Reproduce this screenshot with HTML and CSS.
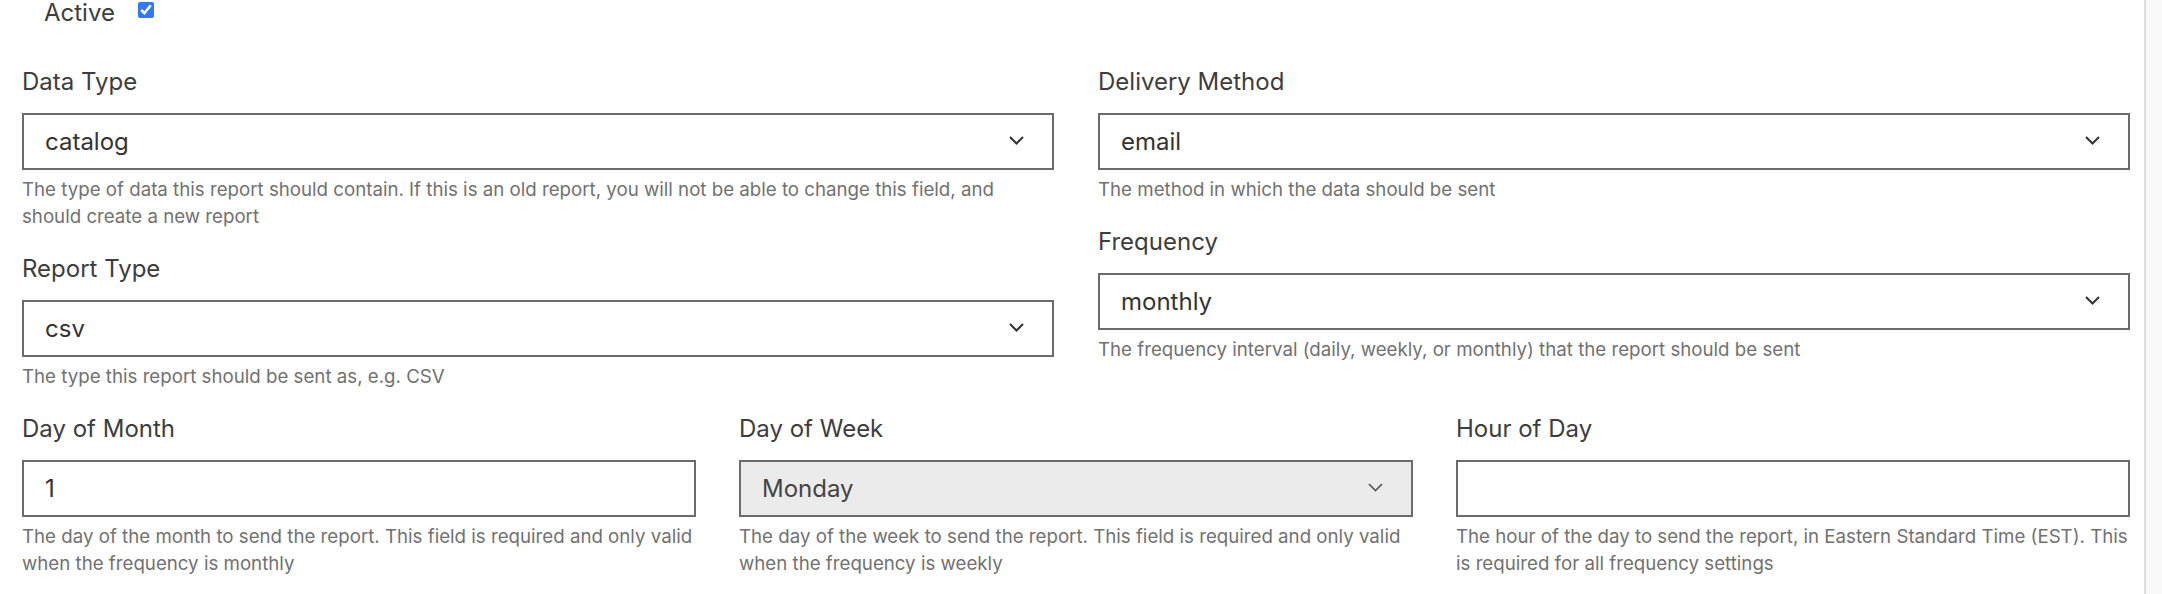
FILE: index.html
```html
<!DOCTYPE html>
<html lang="en">
<head>
  <meta charset="UTF-8" />
  <meta name="viewport" content="width=device-width, initial-scale=1.0"/>
  <title>Report Settings</title>
  <link rel="stylesheet" href="styles.css">
</head>
<body>
  <div class="page">
    <main class="form">

      <!-- active toggle -->
      <div class="active-row">
        <label for="active">Active</label>
        <input type="checkbox" id="active" checked />
      </div>

      <div class="cols">
        <div class="col">
          <div class="field">
            <label class="field-label">Data Type</label>
            <div class="select-wrap">
              <select class="control">
                <option>catalog</option>
              </select>
              <svg class="chevron" width="15" height="9" viewBox="0 0 15 9"><path d="M1 1l6.5 6.5L14 1" /></svg>
            </div>
            <p class="help">The type of data this report should contain. If this is an old report, you will not be able to change this field, and should create a new report</p>
          </div>

          <div class="field">
            <label class="field-label">Report Type</label>
            <div class="select-wrap">
              <select class="control">
                <option>csv</option>
              </select>
              <svg class="chevron" width="15" height="9" viewBox="0 0 15 9"><path d="M1 1l6.5 6.5L14 1" /></svg>
            </div>
            <p class="help">The type this report should be sent as, e.g. CSV</p>
          </div>
        </div>

        <div class="col">
          <div class="field">
            <label class="field-label">Delivery Method</label>
            <div class="select-wrap">
              <select class="control">
                <option>email</option>
              </select>
              <svg class="chevron" width="15" height="9" viewBox="0 0 15 9"><path d="M1 1l6.5 6.5L14 1" /></svg>
            </div>
            <p class="help">The method in which the data should be sent</p>
          </div>

          <div class="field">
            <label class="field-label">Frequency</label>
            <div class="select-wrap">
              <select class="control">
                <option>monthly</option>
              </select>
              <svg class="chevron" width="15" height="9" viewBox="0 0 15 9"><path d="M1 1l6.5 6.5L14 1" /></svg>
            </div>
            <p class="help">The frequency interval (daily, weekly, or monthly) that the report should be sent</p>
          </div>
        </div>
      </div>

      <!-- schedule -->
      <div class="schedule">
        <div class="field">
          <label class="field-label">Day of Month</label>
          <input class="control" type="text" value="1" />
          <p class="help">The day of the month to send the report. This field is required and only valid when the frequency is monthly</p>
        </div>

        <div class="field">
          <label class="field-label">Day of Week</label>
          <div class="select-wrap">
            <select class="control" disabled>
              <option>Monday</option>
            </select>
            <svg class="chevron thin" width="15" height="9" viewBox="0 0 15 9"><path d="M1 1l6.5 6.5L14 1" /></svg>
          </div>
          <p class="help">The day of the week to send the report. This field is required and only valid when the frequency is weekly</p>
        </div>

        <div class="field">
          <label class="field-label">Hour of Day</label>
          <input class="control" type="text" value="" />
          <p class="help">The hour of the day to send the report, in Eastern Standard Time (EST). This is required for all frequency settings</p>
        </div>
      </div>

    </main>
    <div class="scrollbar"></div>
  </div>
</body>
</html>
```

FILE: styles.css
```css
body {
  margin: 0;
  background: #ffffff;
  font-family: Inter, 'Noto Sans', sans-serif;
  color: #404040;
}

.page {
  display: flex;
  height: 100vh;
  overflow: hidden;
}

.form {
  flex: 1;
  padding: 1px 14px 0 22px;
}

.scrollbar {
  width: 16px;
  border-left: 2px solid #dedede;
  background: #f9f9f9;
}

.active-row {
  display: flex;
  align-items: flex-start;
  height: 24px;
  padding-left: 22px;
  margin-bottom: 39px;
}

.active-row label {
  font-size: 24px;
  line-height: 24px;
  color: #3d3d3d;
}

.active-row input {
  width: 16px;
  height: 16px;
  margin: 1px 0 0 23px;
  accent-color: #3478f6;
}

.cols {
  display: grid;
  grid-template-columns: 1fr 1fr;
  column-gap: 44px;
}

.schedule {
  display: grid;
  grid-template-columns: 1fr 1fr 1fr;
  column-gap: 43px;
}

.field {
  margin-bottom: 21px;
}

.field-label {
  display: block;
  font-size: 24px;
  line-height: 36px;
  color: #3d3d3d;
  margin-bottom: 13px;
}

.select-wrap {
  position: relative;
}

.control {
  display: block;
  width: 100%;
  height: 57px;
  box-sizing: border-box;
  border: 2px solid #6b6b6b;
  border-radius: 0;
  background: #ffffff;
  padding: 0 60px 0 21px;
  font-family: Inter, 'Noto Sans', sans-serif;
  font-size: 24px;
  color: #333333;
  outline: none;
  appearance: none;
  -webkit-appearance: none;
}

select.control:disabled {
  background: #ebebeb;
  color: #444444;
  opacity: 1;
}

.chevron {
  position: absolute;
  right: 30px;
  top: 23px;
  pointer-events: none;
}

.chevron path {
  fill: none;
  stroke: #333333;
  stroke-width: 2;
}

.chevron.thin path {
  stroke: #555555;
  stroke-width: 1.6;
}

.help {
  margin: 6px 0 0;
  font-size: 18.7px;
  line-height: 27px;
  color: #717171;
}

.cols .help {
  max-width: 1000px;
}

.schedule .help {
  margin-right: -8px;
}
```
